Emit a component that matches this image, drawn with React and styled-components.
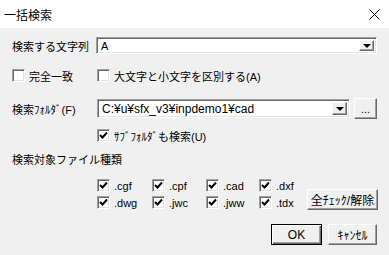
import React from 'react';
import styled, { createGlobalStyle } from 'styled-components';

const GlobalStyle = createGlobalStyle`
  html, body {
    margin: 0;
    padding: 0;
    background: #f0f0f0;
  }
  body {
    font-family: "Liberation Sans", "Noto Sans CJK JP", sans-serif;
    font-size: 11px;
    color: #000;
  }
`;

const Window = styled.div`
  width: 389px;
  height: 255px;
  display: flex;
  flex-direction: column;
  background: #f0f0f0;
  overflow: hidden;
`;

const TitleBar = styled.div`
  height: 28px;
  flex: none;
  background: #fff;
  display: flex;
  align-items: center;
  justify-content: space-between;
  padding: 0 9px 0 4px;
  font-size: 12px;
`;

const Body = styled.div`
  display: flex;
  flex-direction: column;
  padding: 9px 12px 0 12px;
`;

const Row = styled.div`
  display: flex;
  align-items: center;
  height: ${(p) => p.h || 13}px;
  margin-top: ${(p) => p.mt || 0}px;
  padding-left: ${(p) => p.indent || 0}px;
`;

const Label = styled.div`
  width: ${(p) => p.w || 84}px;
  flex: none;
  white-space: nowrap;
`;

const Combo = styled.div`
  width: ${(p) => p.w}px;
  height: ${(p) => p.h}px;
  box-sizing: border-box;
  background: #fff;
  border: 1px solid;
  border-color: #a0a0a0 #fff #fff #a0a0a0;
  box-shadow: inset 1px 1px #696969, inset -1px -1px #e3e3e3;
  display: flex;
  align-items: center;
  padding: 2px 2px 2px 4px;
`;

const ComboText = styled.div`
  flex: 1;
  white-space: nowrap;
  font-size: ${(p) => p.fs || 11}px;
`;

const DropButton = styled.div`
  width: 15px;
  height: 100%;
  box-sizing: border-box;
  flex: none;
  background: #f0f0f0;
  border: 1px solid;
  border-color: #fff #696969 #696969 #fff;
  box-shadow: inset -1px -1px #a0a0a0;
  display: flex;
  align-items: center;
  justify-content: center;
`;

const Arrow = styled.div`
  width: 0;
  height: 0;
  border-left: 4px solid transparent;
  border-right: 4px solid transparent;
  border-top: 4px solid #000;
  margin-top: 1px;
`;

const Button = styled.div`
  width: ${(p) => p.w}px;
  height: ${(p) => p.h || 21}px;
  box-sizing: border-box;
  flex: none;
  background: #f0f0f0;
  border: 1px solid;
  border-color: ${(p) => (p.def ? '#000' : '#fff #696969 #696969 #fff')};
  box-shadow: ${(p) =>
    p.def
      ? 'inset 1px 1px #fff, inset -1px -1px #696969, inset -2px -2px #a0a0a0'
      : 'inset -1px -1px #a0a0a0'};
  display: flex;
  align-items: center;
  justify-content: center;
  white-space: nowrap;
  font-size: 12px;
`;

const BrowseButton = styled(Button)`
  margin-left: 4px;
  font-size: 11px;
`;

const Check = styled.div`
  display: flex;
  align-items: center;
  gap: 4px;
  white-space: nowrap;
  width: ${(p) => (p.w ? `${p.w}px` : 'auto')};
  flex: none;
`;

const Box = styled.div`
  width: 13px;
  height: 13px;
  box-sizing: border-box;
  flex: none;
  background: #fff;
  border: 1px solid;
  border-color: #a0a0a0 #fff #fff #a0a0a0;
  box-shadow: inset 1px 1px #696969, inset -1px -1px #e3e3e3;
  display: flex;
  align-items: center;
  justify-content: center;
`;

const TypesArea = styled.div`
  display: flex;
  margin-top: 14px;
  padding-left: 85px;
`;

const TypeGrid = styled.div`
  display: grid;
  grid-template-columns: 55px 54px 53px 48px;
  row-gap: 4px;
`;

const TypeButton = styled(Button)`
  align-self: flex-end;
  margin-bottom: -1px;
`;

const Footer = styled.div`
  display: flex;
  justify-content: flex-end;
  gap: 6px;
  margin-top: 15px;
`;

const CheckBox = ({ checked, children, w }) => (
  <Check w={w}>
    <Box>
      {checked && (
        <svg width="9" height="9" viewBox="0 0 9 9">
          <path d="M1 4 L3.5 6.5 L8 1.5" stroke="#000" strokeWidth="2" fill="none" />
        </svg>
      )}
    </Box>
    <span>{children}</span>
  </Check>
);

const types = ['.cgf', '.cpf', '.cad', '.dxf', '.dwg', '.jwc', '.jww', '.tdx'];

const App = () => (
  <Window>
    <GlobalStyle />
    <TitleBar>
      <span>一括検索</span>
      <svg width="11" height="11" viewBox="0 0 11 11">
        <path d="M0.5 0.5 L10.5 10.5 M10.5 0.5 L0.5 10.5" stroke="#000" strokeWidth="1" />
      </svg>
    </TitleBar>
    <Body>
      <Row h={17}>
        <Label>検索する文字列</Label>
        <Combo w={282} h={17}>
          <ComboText>A</ComboText>
          <DropButton>
            <Arrow />
          </DropButton>
        </Combo>
      </Row>
      <Row mt={15}>
        <CheckBox w={85}>完全一致</CheckBox>
        <CheckBox>大文字と小文字を区別する(A)</CheckBox>
      </Row>
      <Row h={21} mt={16}>
        <Label w={85}>検索ﾌｫﾙﾀﾞ(F)</Label>
        <Combo w={257} h={19}>
          <ComboText fs={12}>C:¥u¥sfx_v3¥inpdemo1¥cad</ComboText>
          <DropButton>
            <Arrow />
          </DropButton>
        </Combo>
        <BrowseButton w={23} h={21}>...</BrowseButton>
      </Row>
      <Row mt={10} indent={85}>
        <CheckBox checked>ｻﾌﾞﾌｫﾙﾀﾞも検索(U)</CheckBox>
      </Row>
      <Row mt={11} h={12}>
        <Label w={200}>検索対象ファイル種類</Label>
      </Row>
      <TypesArea>
        <TypeGrid>
          {types.map((t) => (
            <CheckBox key={t} checked>
              {t}
            </CheckBox>
          ))}
        </TypeGrid>
        <TypeButton w={71} h={21}>全ﾁｪｯｸ/解除</TypeButton>
      </TypesArea>
      <Footer>
        <Button w={51} def>
          OK
        </Button>
        <Button w={49}>ｷｬﾝｾﾙ</Button>
      </Footer>
    </Body>
  </Window>
);

export default App;
